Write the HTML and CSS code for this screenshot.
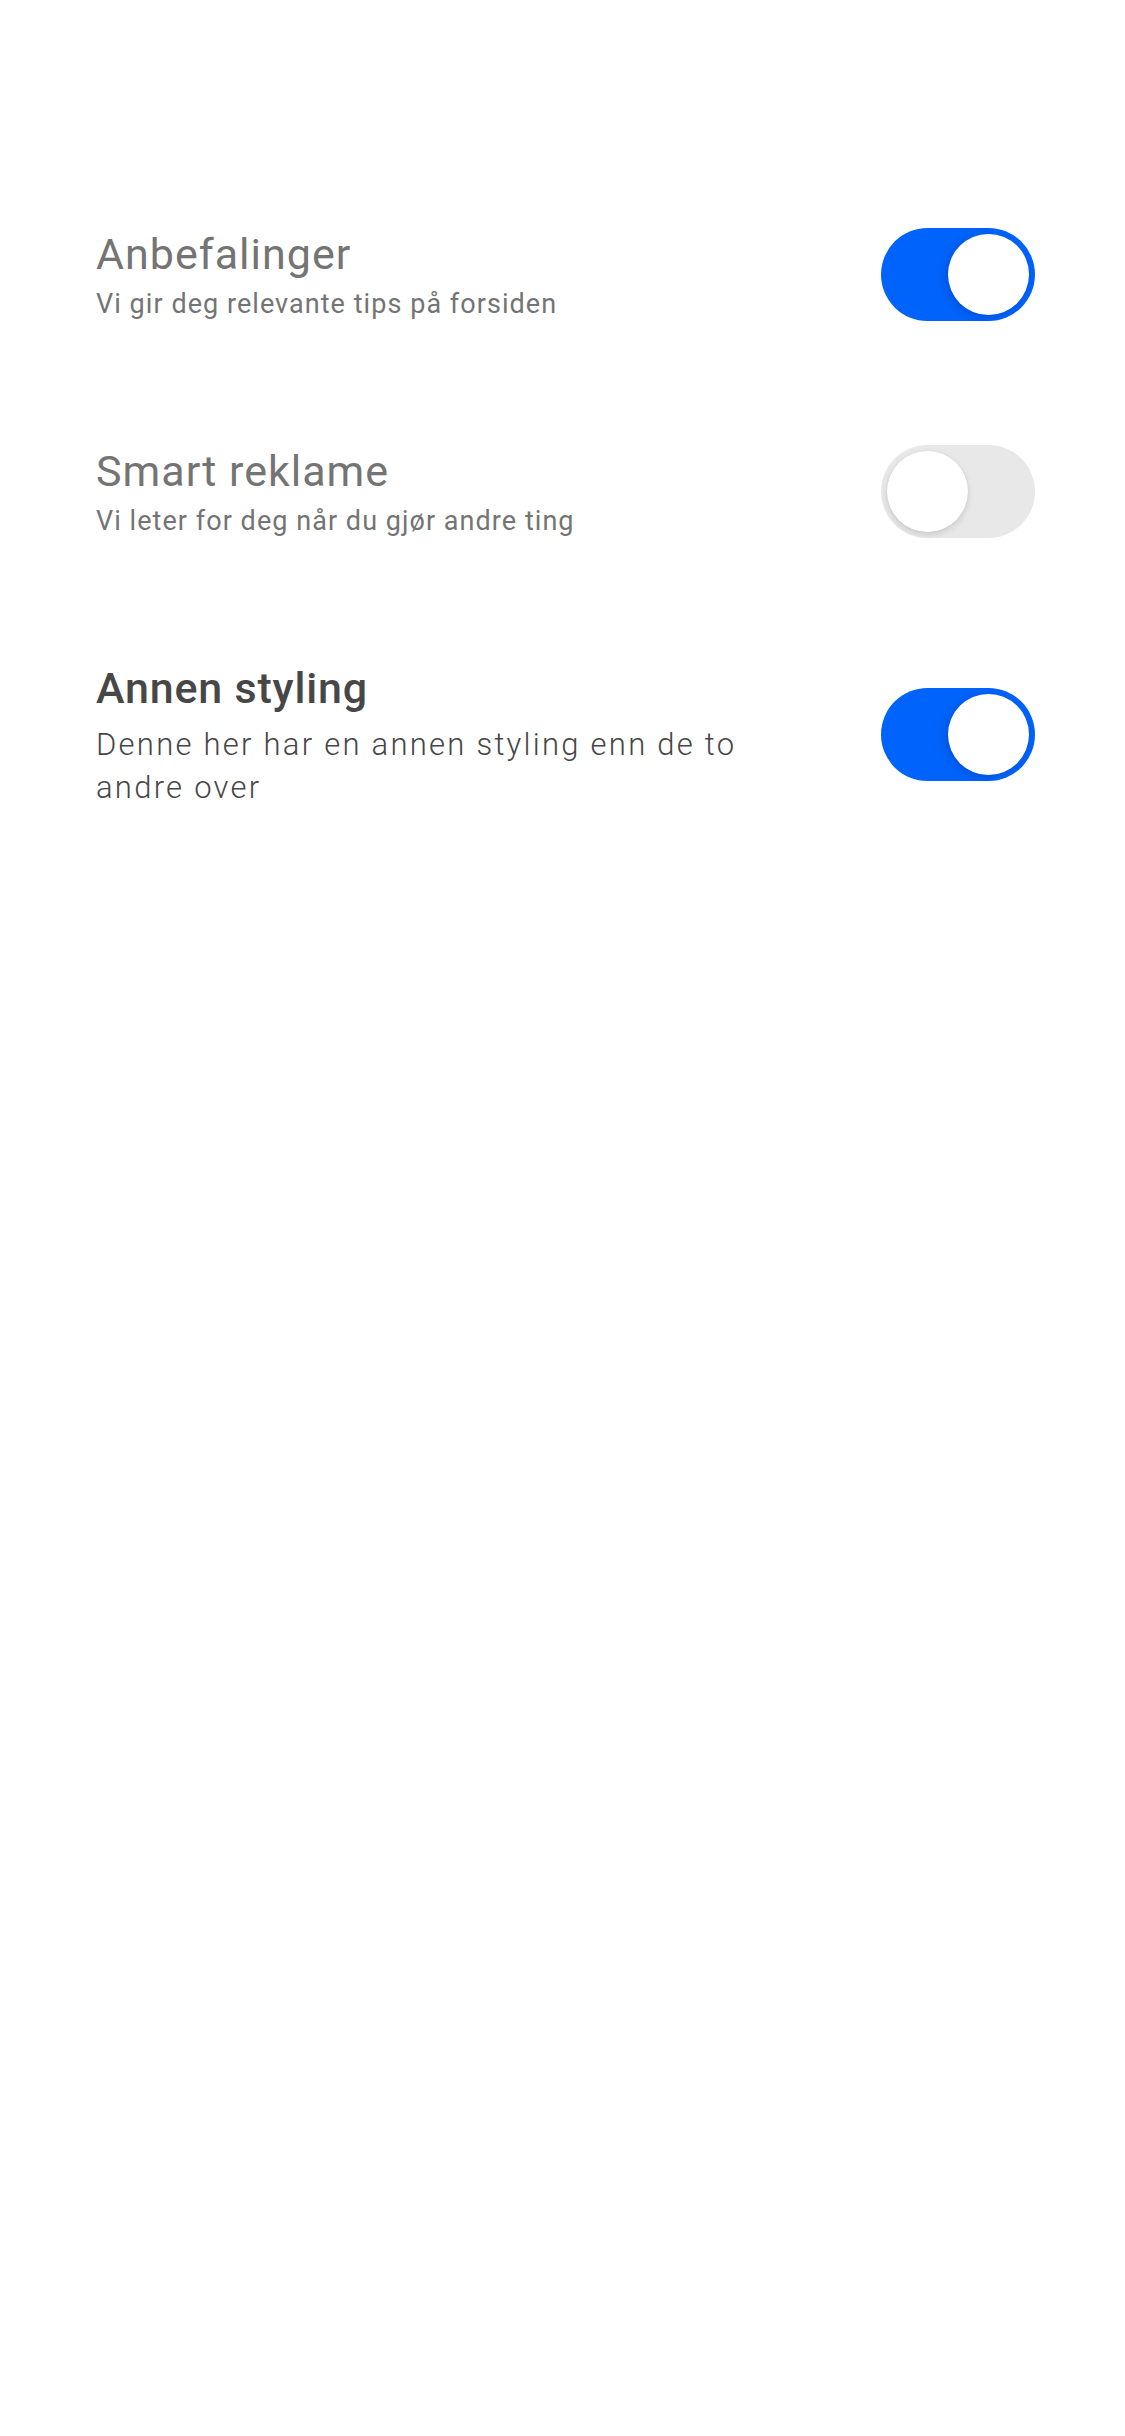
FILE: index.html
```html
<!DOCTYPE html>
<html lang="no">
<head>
<meta charset="utf-8">
<title>Innstillinger</title>
<link rel="stylesheet" href="styles.css">
</head>
<body>
<main class="settings">
  <div class="row">
    <div class="text">
      <div class="title">Anbefalinger</div>
      <div class="sub">Vi gir deg relevante tips på forsiden</div>
    </div>
    <div class="toggle on"><span class="knob"></span></div>
  </div>
  <div class="row">
    <div class="text">
      <div class="title">Smart reklame</div>
      <div class="sub">Vi leter for deg når du gjør andre ting</div>
    </div>
    <div class="toggle"><span class="knob"></span></div>
  </div>
  <div class="row">
    <div class="text alt">
      <div class="title">Annen styling</div>
      <div class="sub">Denne her har en annen styling enn de to andre over</div>
    </div>
    <div class="toggle on"><span class="knob"></span></div>
  </div>
</main>
</body>
</html>
```
FILE: styles.css
```css
html, body {
  margin: 0;
  padding: 0;
  background: #ffffff;
}
body {
  font-family: Roboto, "Liberation Sans", sans-serif;
  width: 1125px;
  min-height: 2436px;
}
.settings {
  display: flex;
  flex-direction: column;
  gap: 120px;
  padding: 226px 90px 0 96px;
}
.row {
  display: flex;
  align-items: center;
  justify-content: space-between;
  gap: 24px;
}
.text {
  flex: 0 1 680px;
  display: flex;
  flex-direction: column;
}
.title {
  font-size: 43px;
  line-height: 56px;
  letter-spacing: 1px;
  color: #747474;
  font-weight: 400;
}
.sub {
  margin-top: 3px;
  font-size: 27px;
  line-height: 38px;
  letter-spacing: 1.05px;
  color: #747474;
}
.alt .title {
  color: #474747;
  font-weight: 500;
  font-size: 43px;
  line-height: 56px;
  letter-spacing: 0.8px;
}
.alt .sub {
  margin-top: 7px;
  color: #474747;
  font-size: 31px;
  line-height: 43px;
  letter-spacing: 2.25px;
  font-weight: 300;
}
.toggle {
  flex: 0 0 auto;
  width: 154px;
  height: 93px;
  border-radius: 47px;
  background: #e8e8e8;
  box-sizing: border-box;
  padding: 6px;
  display: flex;
  justify-content: flex-start;
}
.toggle.on {
  background: #0063fb;
  justify-content: flex-end;
}
.knob {
  width: 81px;
  height: 81px;
  border-radius: 50%;
  background: #ffffff;
  box-shadow: 0 3px 6px rgba(0, 0, 0, 0.12), 0 0 2px rgba(0, 0, 0, 0.08);
}
.toggle.on .knob {
  box-shadow: -2px 2px 8px rgba(0, 0, 40, 0.18);
}
```
